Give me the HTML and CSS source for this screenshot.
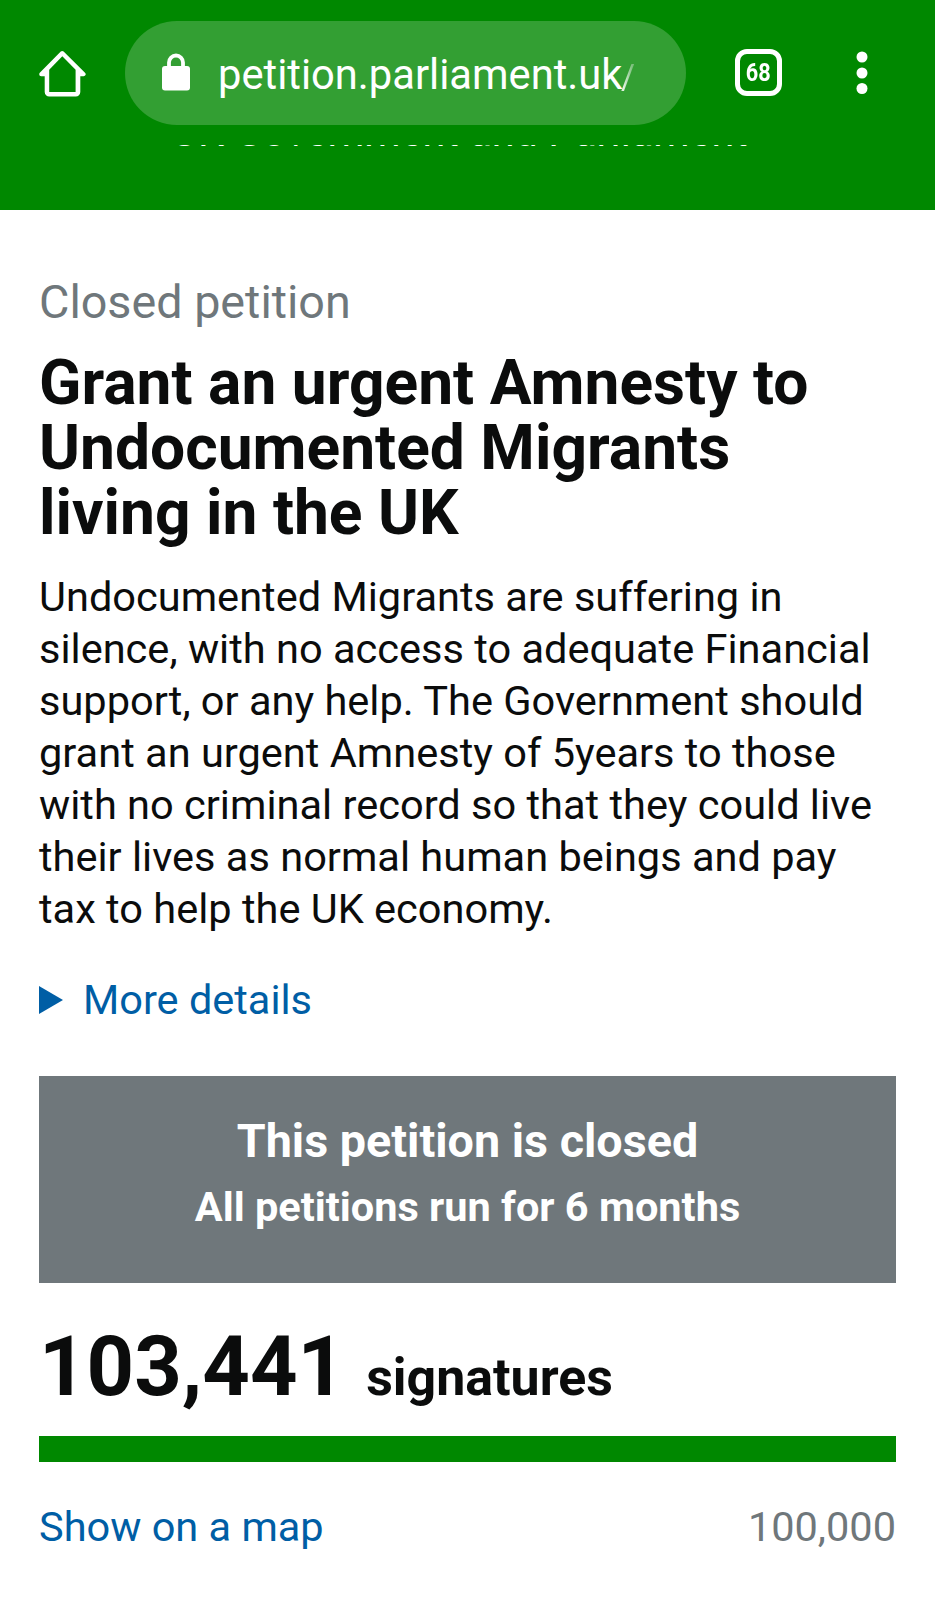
FILE: index.html
```html
<!DOCTYPE html>
<html lang="en">
<head>
  <meta charset="UTF-8">
  <meta name="viewport" content="width=device-width, initial-scale=1.0">
  <title>Grant an urgent Amnesty to Undocumented Migrants living in the UK - Petitions</title>
  <link rel="stylesheet" href="styles.css">
</head>
<body>
  <div class="toolbar">
    <svg class="home" viewBox="0 0 48 48" width="48" height="48">
      <path d="M3.2 25.2L24.2 4l21.4 21.2h-5.3V43a2.5 2.5 0 0 1-2.5 2.5H11.2A2.5 2.5 0 0 1 8.7 43V25.2z" fill="#fff" stroke="#fff" stroke-width="4" stroke-linejoin="round"/>
      <path d="M24.3 7.3L11.2 20.8V43h26.4V20.8z" fill="#080"/>
    </svg>
    <div class="address">
      <svg class="lock" viewBox="0 0 28 38" width="28" height="38">
        <path d="M7 15V9.5a7 7 0 0 1 14 0V15" fill="none" stroke="#fff" stroke-width="3.8"/>
        <rect x="0" y="13" width="28" height="24.5" rx="3" fill="#fff"/>
      </svg>
      <span class="url">petition.parliament.uk<span class="fade">/</span></span>
    </div>
    <div class="tabs"><span class="tab-count">68</span></div>
    <svg class="menu" viewBox="0 0 12 44" width="12" height="44">
      <circle cx="6" cy="6" r="5.5" fill="#fff"/>
      <circle cx="6" cy="22" r="5.5" fill="#fff"/>
      <circle cx="6" cy="37.5" r="5.5" fill="#fff"/>
    </svg>
  </div>

  <header class="site-header">
    <div class="tagline">UK Government and Parliament</div>
  </header>

  <main>
    <p class="status">Closed petition</p>
    <h1>Grant an urgent Amnesty to<br>Undocumented Migrants<br>living in the UK</h1>
    <p class="description">Undocumented Migrants are suffering in<br>silence, with no access to adequate Financial<br>support, or any help. The Government should<br>grant an urgent Amnesty of 5years to those<br>with no criminal record so that they could live<br>their lives as normal human beings and pay<br>tax to help the UK economy.</p>

    <a class="more" href="#"><span class="arrow"></span>More details</a>

    <div class="closed">
      <p class="closed-title">This petition is closed</p>
      <p class="closed-text">All petitions run for 6 months</p>
    </div>

    <p class="signatures"><span class="count">103,441</span><span class="unit">signatures</span></p>
    <div class="progress"></div>
    <div class="below">
      <a href="#">Show on a map</a>
      <span class="target">100,000</span>
    </div>
  </main>
</body>
</html>
```

FILE: styles.css
```css
body {
  margin: 0;
  font-family: Roboto, sans-serif;
  background-color: #fff;
  color: #0b0c0c;
}
p, h1 {
  margin: 0;
}
a {
  color: #005ea5;
  text-decoration: none;
}
.toolbar {
  display: flex;
  align-items: center;
  box-sizing: border-box;
  height: 145px;
  padding: 0 0 0 38px;
  background-color: #008800;
}
.address {
  display: flex;
  align-items: center;
  box-sizing: border-box;
  width: 561px;
  height: 104px;
  margin-left: 39px;
  padding-left: 37px;
  border-radius: 52px;
  background-color: #339f33;
}
.lock {
  margin-top: -2px;
}
.url {
  margin: 3px 0 0 28px;
  font-size: 41.7px;
  color: #fff;
  white-space: nowrap;
}
.fade {
  display: inline-block;
  margin-left: -1px;
  color: transparent;
  background: linear-gradient(to right, #e0f1e0 20%, #7cc07c 80%);
  background-clip: text;
  -webkit-background-clip: text;
  transform: scale(0.82, 0.82);
  transform-origin: 0 75%;
}
.tabs {
  box-sizing: border-box;
  width: 47px;
  height: 47px;
  margin-left: 49px;
  border: 5px solid #fff;
  border-radius: 12px;
  color: #fff;
  font-size: 26.5px;
  font-weight: bold;
  line-height: 36px;
  text-align: center;
}
.tab-count {
  display: inline-block;
  margin: 0 -5px;
  transform: scaleX(0.82);
}
.menu {
  margin-left: 74px;
}
.site-header {
  height: 65px;
  background-color: #008800;
  overflow: hidden;
}
/* scrolled up under the toolbar */
.tagline {
  margin-top: -34px;
  padding-right: 16px;
  color: #fff;
  font-size: 41.4px;
  line-height: 42px;
  text-align: center;
}
main {
  padding: 66px 39px 0;
}
.status {
  font-size: 46.7px;
  line-height: 52px;
  color: #6f777b;
}
h1 {
  margin-top: 22px;
  font-size: 62.3px;
  font-weight: bold;
  line-height: 65px;
  white-space: nowrap;
}
.description {
  margin-top: 26px;
  font-size: 41.55px;
  line-height: 52px;
  white-space: nowrap;
}
.more {
  display: flex;
  align-items: center;
  margin-top: 39px;
  font-size: 41.5px;
  line-height: 52px;
}
.arrow {
  margin-right: 20px;
  border-left: 24px solid #005ea5;
  border-top: 14px solid transparent;
  border-bottom: 14px solid transparent;
}
.closed {
  box-sizing: border-box;
  height: 207px;
  margin-top: 50px;
  padding-top: 33px;
  background-color: #6f777b;
  color: #fff;
  font-weight: bold;
  text-align: center;
}
.closed-title {
  font-size: 46.7px;
  line-height: 65px;
}
.closed-text {
  font-size: 41.5px;
  line-height: 65px;
}
.signatures {
  height: 90px;
  margin-top: 39px;
  font-weight: bold;
  line-height: 90px;
}
.count {
  font-size: 83px;
}
.unit {
  margin-left: 21px;
  font-size: 51.9px;
}
.progress {
  height: 26px;
  margin-top: 24px;
  background-color: #008800;
}
.below {
  display: flex;
  justify-content: space-between;
  margin-top: 39px;
  font-size: 41.5px;
  line-height: 52px;
}
.target {
  color: #6f777b;
}
```
